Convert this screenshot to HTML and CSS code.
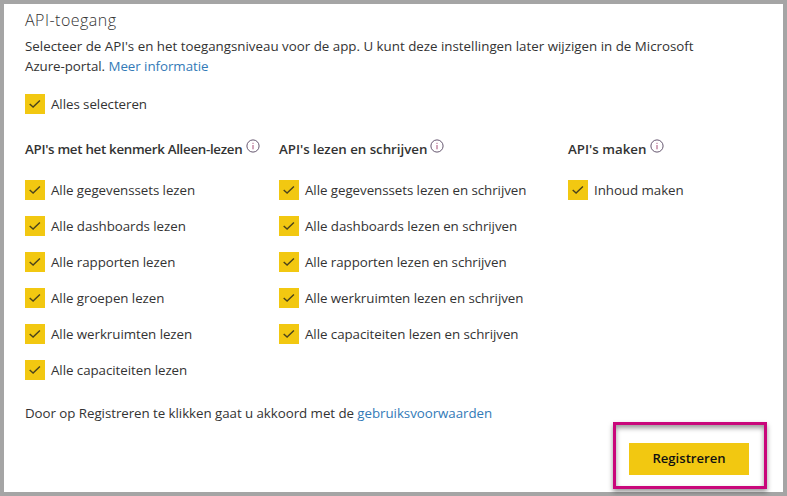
FILE: index.html
```html
<!DOCTYPE html>
<html lang="nl">
<head>
<meta charset="utf-8">
<title>API-toegang</title>
<link rel="stylesheet" href="styles.css">
</head>
<body>
<svg width="0" height="0" class="defs" aria-hidden="true">
  <symbol id="check" viewBox="0 0 20 20"><path d="M4.7 9.9 8.1 13 14.9 6.5" fill="none" stroke="#4a431c" stroke-width="1.4"/></symbol>
  <symbol id="info" viewBox="0 0 14 14"><circle cx="7" cy="7" r="6.1" fill="none" stroke="#65566f" stroke-width="1"/><path d="M7 6v4.3M7 3.8v1.1" fill="none" stroke="#a74e78" stroke-width="1"/></symbol>
</svg>
<main class="panel">
  <h1 class="title">API-toegang</h1>
  <p class="intro">Selecteer de API's en het toegangsniveau voor de app. U kunt deze instellingen later wijzigen in de Microsoft<br><span class="second">Azure-portal. <a class="link">Meer informatie</a></span></p>
  <div class="check all"><svg class="box"><use href="#check"/></svg><span>Alles selecteren</span></div>
  <div class="groups">
    <section class="group">
      <h2 class="heading"><span class="h-read">API's met het kenmerk Alleen-lezen</span><svg class="info"><use href="#info"/></svg></h2>
      <div class="check"><svg class="box"><use href="#check"/></svg><span>Alle gegevenssets lezen</span></div>
      <div class="check"><svg class="box"><use href="#check"/></svg><span>Alle dashboards lezen</span></div>
      <div class="check"><svg class="box"><use href="#check"/></svg><span>Alle rapporten lezen</span></div>
      <div class="check"><svg class="box"><use href="#check"/></svg><span>Alle groepen lezen</span></div>
      <div class="check"><svg class="box"><use href="#check"/></svg><span>Alle werkruimten lezen</span></div>
      <div class="check"><svg class="box"><use href="#check"/></svg><span>Alle capaciteiten lezen</span></div>
    </section>
    <section class="group">
      <h2 class="heading"><span class="h-write">API's lezen en schrijven</span><svg class="info"><use href="#info"/></svg></h2>
      <div class="check"><svg class="box"><use href="#check"/></svg><span>Alle gegevenssets lezen en schrijven</span></div>
      <div class="check"><svg class="box"><use href="#check"/></svg><span>Alle dashboards lezen en schrijven</span></div>
      <div class="check"><svg class="box"><use href="#check"/></svg><span>Alle rapporten lezen en schrijven</span></div>
      <div class="check"><svg class="box"><use href="#check"/></svg><span>Alle werkruimten lezen en schrijven</span></div>
      <div class="check"><svg class="box"><use href="#check"/></svg><span>Alle capaciteiten lezen en schrijven</span></div>
    </section>
    <section class="group">
      <h2 class="heading"><span class="h-make">API's maken</span><svg class="info"><use href="#info"/></svg></h2>
      <div class="check"><svg class="box"><use href="#check"/></svg><span>Inhoud maken</span></div>
    </section>
  </div>
  <p class="terms">Door op Registreren te klikken gaat u akkoord met de <a class="link">gebruiksvoorwaarden</a></p>
  <div class="actions"><button class="register">Registreren</button></div>
</main>
<div class="highlight"></div>
</body>
</html>
```
FILE: styles.css
```css
* { box-sizing: border-box; }
body { margin: 0; font: 13.33px/20px "Open Sans", "Noto Sans", sans-serif; color: #333; background: #fff; }
.defs { position: absolute; }
.panel { height: 496px; border: 4px solid #a5a5a5; padding: 4px 34px 0 21px; overflow: hidden; }
.title { margin: 0; font-size: 16px; font-weight: 300; line-height: 24px; letter-spacing: .48px; }
.intro { margin: 4px 0 18px; white-space: nowrap; }
.second { letter-spacing: -.05px; }
.link { color: #337ab7; }
.check { display: flex; align-items: center; gap: 6px; height: 20px; margin-bottom: 16px; white-space: nowrap; letter-spacing: -.055px; }
.box { width: 20px; height: 20px; background: #f2c811; flex: none; }
.all { margin-bottom: 25px; }
.groups { display: grid; grid-template-columns: 254px 289px 1fr; height: 264px; }
.heading { display: flex; margin: 0 0 21px; height: 20px; font-size: 13.33px; font-weight: 600; white-space: nowrap; }
.info { width: 14px; height: 14px; margin: 0 0 0 4px; flex: none; }
.h-read { width: 217px; letter-spacing: -.3px; }
.h-write { width: 147px; letter-spacing: -.04px; }
.h-make { width: 78px; }
.terms { margin: 0 0 20px; letter-spacing: -.055px; }
.actions { display: flex; justify-content: flex-end; margin-right: -4px; }
.register { width: 120px; height: 32px; margin-right: 4px; padding: 0 0 2px; border: 0; background: #f2c811; color: #111; font: 600 13.1px/20px "Open Sans", sans-serif; }
.highlight { position: absolute; left: 613px; top: 422px; width: 154px; height: 67px; border: 3px solid #c9087b; box-shadow: 0 3px 5px rgba(0,0,0,.4), inset 0 3px 5px rgba(0,0,0,.4); pointer-events: none; }
```
